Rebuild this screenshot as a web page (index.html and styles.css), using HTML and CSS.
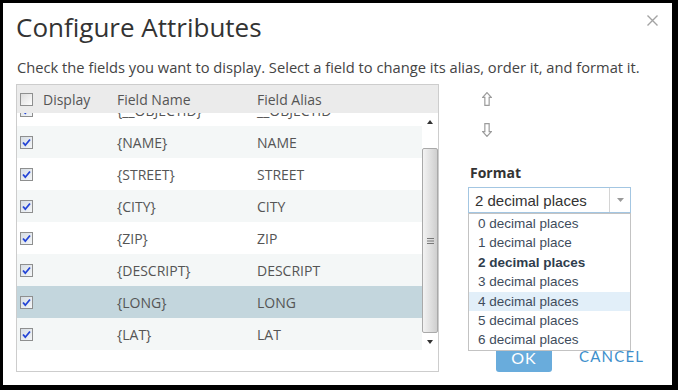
FILE: index.html
```html
<!DOCTYPE html>
<html lang="en">
<head>
    <meta charset="UTF-8">
    <title>Configure Attributes</title>
    <link rel="stylesheet" href="styles.css">
</head>
<body>

    <div class="dialog">
        <div class="dialog-header">
            <h1>Configure Attributes</h1>
            <svg class="close-icon" viewBox="0 0 11 11"><path d="M0.5 0.5 L10.5 10.5 M10.5 0.5 L0.5 10.5"/></svg>
        </div>
        <p class="intro">Check the fields you want to display. Select a field to change its alias, order it, and format it.</p>

        <div class="dialog-body">
            <div class="grid">
                <div class="grid-head">
                    <div class="cell cell-check"><span class="checkbox"></span>Display</div>
                    <div class="cell">Field Name</div>
                    <div class="cell">Field Alias</div>
                </div>
                <div class="grid-main">
                    <div class="grid-rows">
                        <div class="grid-inner">
                            <div class="row"><div class="cell cell-check"><span class="checkbox checked"><svg viewBox="0 0 11 11"><path d="M2 5.5 L4.3 8.2 L9 2.5"/></svg></span></div><div class="cell">{__OBJECTID}</div><div class="cell">__OBJECTID</div></div>
                            <div class="row"><div class="cell cell-check"><span class="checkbox checked"><svg viewBox="0 0 11 11"><path d="M2 5.5 L4.3 8.2 L9 2.5"/></svg></span></div><div class="cell">{NAME}</div><div class="cell">NAME</div></div>
                            <div class="row"><div class="cell cell-check"><span class="checkbox checked"><svg viewBox="0 0 11 11"><path d="M2 5.5 L4.3 8.2 L9 2.5"/></svg></span></div><div class="cell">{STREET}</div><div class="cell">STREET</div></div>
                            <div class="row"><div class="cell cell-check"><span class="checkbox checked"><svg viewBox="0 0 11 11"><path d="M2 5.5 L4.3 8.2 L9 2.5"/></svg></span></div><div class="cell">{CITY}</div><div class="cell">CITY</div></div>
                            <div class="row"><div class="cell cell-check"><span class="checkbox checked"><svg viewBox="0 0 11 11"><path d="M2 5.5 L4.3 8.2 L9 2.5"/></svg></span></div><div class="cell">{ZIP}</div><div class="cell">ZIP</div></div>
                            <div class="row"><div class="cell cell-check"><span class="checkbox checked"><svg viewBox="0 0 11 11"><path d="M2 5.5 L4.3 8.2 L9 2.5"/></svg></span></div><div class="cell">{DESCRIPT}</div><div class="cell">DESCRIPT</div></div>
                            <div class="row selected"><div class="cell cell-check"><span class="checkbox checked"><svg viewBox="0 0 11 11"><path d="M2 5.5 L4.3 8.2 L9 2.5"/></svg></span></div><div class="cell">{LONG}</div><div class="cell">LONG</div></div>
                            <div class="row"><div class="cell cell-check"><span class="checkbox checked"><svg viewBox="0 0 11 11"><path d="M2 5.5 L4.3 8.2 L9 2.5"/></svg></span></div><div class="cell">{LAT}</div><div class="cell">LAT</div></div>
                        </div>
                    </div>
                    <div class="scrollbar">
                        <div class="sb-arrow"><svg viewBox="0 0 6 4"><path d="M0 4 L3 0 L6 4 Z"/></svg></div>
                        <div class="sb-thumb"><svg viewBox="0 0 7 6"><path d="M0 0.5 H7 M0 3 H7 M0 5.5 H7"/></svg></div>
                        <div class="sb-arrow sb-down"><svg viewBox="0 0 6 4"><path d="M0 0 L6 0 L3 4 Z"/></svg></div>
                    </div>
                </div>
            </div>

            <div class="side">
                <div class="move-btns">
                    <svg class="move-icon" viewBox="0 0 9 13"><path d="M4.5 0.5 L8.5 5 L6.5 5 L6.5 12.5 L2.5 12.5 L2.5 5 L0.5 5 Z"/></svg>
                    <svg class="move-icon" viewBox="0 0 9 13"><path d="M4.5 12.5 L8.5 8 L6.5 8 L6.5 0.5 L2.5 0.5 L2.5 8 L0.5 8 Z"/></svg>
                </div>
                <div class="format-label">Format</div>
                <div class="select">
                    <span class="select-value">2 decimal places</span>
                    <span class="select-arrow"><svg viewBox="0 0 7 4"><path d="M0 0 L7 0 L3.5 4 Z"/></svg></span>
                    <ul class="select-list">
                        <li>0 decimal places</li>
                        <li>1 decimal place</li>
                        <li class="current">2 decimal places</li>
                        <li>3 decimal places</li>
                        <li class="hover">4 decimal places</li>
                        <li>5 decimal places</li>
                        <li>6 decimal places</li>
                    </ul>
                </div>
                <div class="actions">
                    <button class="btn-ok">OK</button>
                    <button class="btn-cancel">CANCEL</button>
                </div>
            </div>
        </div>
    </div>

</body>
</html>
```

FILE: styles.css
```css
* {
    box-sizing: border-box;
}
body {
    margin: 0;
    background-color: #000;
    font-family: "Open Sans", "Noto Sans", sans-serif;
    color: #444;
}
.dialog {
    margin: 3px 6px 5px 3px;
    height: 382px;
    background-color: #fff;
    padding-left: 13px;
}
.dialog-header {
    display: flex;
    justify-content: space-between;
    align-items: flex-start;
    padding-top: 8px;
    padding-right: 14px;
}
h1 {
    margin: 0;
    font-size: 26px;
    font-weight: 400;
    line-height: 32px;
    color: #333;
}
.close-icon {
    width: 11px;
    height: 11px;
    margin-top: 4px;
    fill: none;
    stroke: #a3a3a3;
    stroke-width: 1.4;
}
.intro {
    margin: 15px 0 0 1px;
    font-size: 14.7px;
    line-height: 18px;
    color: #444;
    white-space: nowrap;
}
.dialog-body {
    display: flex;
    margin-top: 8px;
}

/* field grid */
.grid {
    width: 423px;
    flex-shrink: 0;
    border: 1px solid #cdcdcd;
}
.grid-head,
.row {
    display: grid;
    grid-template-columns: 100px 140px 1fr;
    align-items: center;
    font-size: 14px;
    color: #555;
}
.grid-head {
    height: 28px;
    background-color: #ebebeb;
}
.cell-check {
    display: flex;
    align-items: center;
    gap: 10px;
    padding-left: 3px;
}
.checkbox {
    width: 13px;
    height: 13px;
    border: 1px solid #8e8f8f;
    background: linear-gradient(135deg, #dcdcdc, #fdfdfd);
    display: inline-block;
}
.checkbox.checked {
    background: linear-gradient(135deg, #d6dde4, #f4f6f8);
}
.checkbox svg {
    display: block;
    width: 11px;
    height: 11px;
    fill: none;
    stroke: #2344d6;
    stroke-width: 1.8;
}
.grid-main {
    display: flex;
}
.grid-rows {
    flex: 1;
    height: 238px;
    overflow: hidden;
}
.grid-inner {
    margin-top: -19px;
}
.row {
    height: 32px;
    background-color: #fff;
}
.row:nth-child(even) {
    background-color: #f4f7f7;
}
.row.selected {
    background-color: #c3d6dd;
}
.scrollbar {
    width: 16px;
    display: flex;
    flex-direction: column;
}
.sb-arrow {
    height: 18px;
    display: flex;
    align-items: center;
    justify-content: center;
}
.sb-arrow svg {
    width: 6px;
    height: 4px;
    fill: #333;
}
.sb-down {
    flex: 1;
}
.sb-thumb {
    margin-top: 17px;
    height: 185px;
    border: 1px solid #a9a9a9;
    border-radius: 2px;
    background: linear-gradient(to right, #f3f3f3, #cfcfcf);
    display: flex;
    align-items: center;
    justify-content: center;
}
.sb-thumb svg {
    width: 7px;
    height: 6px;
    stroke: #777;
    stroke-width: 1;
}

/* right column */
.side {
    position: relative;
    width: 164px;
    margin-left: 29px;
}
.move-btns {
    display: flex;
    flex-direction: column;
    gap: 17px;
    padding-top: 8px;
    padding-left: 14px;
}
.move-icon {
    width: 10px;
    height: 14px;
    fill: none;
    stroke: #9c9c9c;
    stroke-width: 1.1;
}
.format-label {
    margin-top: 26px;
    margin-left: 2px;
    font-size: 14px;
    font-weight: 700;
    line-height: 20px;
    color: #333;
}
.select {
    position: relative;
    margin-top: 4px;
    width: 163px;
    height: 26px;
    border: 1px solid #a3c6e2;
    display: flex;
    align-items: center;
    font-family: "Liberation Sans", Arial, sans-serif;
}
.select-value {
    flex: 1;
    padding-left: 6px;
    font-size: 15px;
    color: #333;
}
.select-arrow {
    width: 21px;
    height: 100%;
    border-left: 1px solid #d4d4d4;
    display: flex;
    align-items: center;
    justify-content: center;
}
.select-arrow svg {
    width: 7px;
    height: 4px;
    fill: #9a9a9a;
}
.select-list {
    position: absolute;
    top: 25px;
    left: -1px;
    width: 163px;
    margin: 0;
    padding: 0;
    list-style: none;
    background-color: #fff;
    border: 1px solid #c3c3c3;
    z-index: 2;
}
.select-list li {
    height: 19.4px;
    line-height: 19.4px;
    padding-left: 9px;
    font-size: 13.5px;
    color: #3e4c5c;
}
.select-list li.current {
    font-weight: 700;
    color: #2f3d4d;
}
.select-list li.hover {
    background-color: #e2eff9;
}
.actions {
    display: flex;
    align-items: flex-start;
    margin-top: 131px;
}
.btn-ok {
    flex-shrink: 0;
    width: 56px;
    height: 28px;
    margin-left: 28px;
    padding: 0;
    border: none;
    border-radius: 3px;
    background-color: #69acdc;
    color: #fff;
    font-family: Lato, "Open Sans", sans-serif;
    font-size: 16px;
    line-height: 24px;
    letter-spacing: 1px;
}
.btn-cancel {
    flex-shrink: 0;
    margin-left: 27px;
    padding: 0;
    border: none;
    background: none;
    color: #3d8fcc;
    font-family: Lato, "Open Sans", sans-serif;
    font-size: 15px;
    line-height: 24px;
    letter-spacing: 1.2px;
}
```
